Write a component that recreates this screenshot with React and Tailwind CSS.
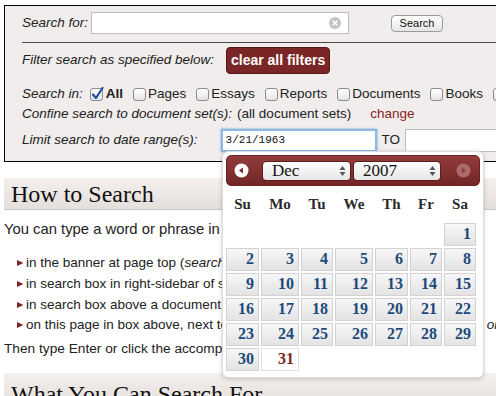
import React from 'react';

const cols = 'grid grid-cols-[33px_38px_32px_38px_33px_32px_32px] gap-[2px]';

const Checkbox = ({ checked }) => (
    <span className="relative inline-block w-[13px] h-[13px] rounded-[3px] border border-[#8c8c8c] bg-linear-to-b from-white to-[#e4e4e4] shrink-0">
        {checked && (
            <svg className="absolute -left-[1px] -top-[3px]" width="15" height="16" viewBox="0 0 15 16">
                <path d="M3 8.5 L6 12 L12.5 2" fill="none" stroke="#1f4fa0" strokeWidth="2.2" strokeLinecap="round" strokeLinejoin="round" />
            </svg>
        )}
    </span>
);

const SelectArrows = () => (
    <svg width="7" height="12" viewBox="0 0 7 12">
        <path d="M3.5 1 L6.5 5 L0.5 5 Z" fill="#555" />
        <path d="M3.5 11 L6.5 7 L0.5 7 Z" fill="#555" />
    </svg>
);

const Bullet = ({ children }) => (
    <li className="flex items-center h-[20.67px] whitespace-nowrap">
        <svg className="ml-[12px] mr-[2px] shrink-0" width="8" height="8" viewBox="0 0 8 8">
            <path d="M1 1 L7.5 4 L1 7 Z" fill="#7d2424" />
        </svg>
        <span>{children}</span>
    </li>
);

const days = [
    [null, null, null, null, null, null, 1],
    [2, 3, 4, 5, 6, 7, 8],
    [9, 10, 11, 12, 13, 14, 15],
    [16, 17, 18, 19, 20, 21, 22],
    [23, 24, 25, 26, 27, 28, 29],
    [30, 31, null, null, null, null, null],
];

const Calendar = () => (
    <div className="absolute left-[222px] top-[151px] w-[262px] h-[227px] bg-white rounded-[6px] border border-[#dcdcdc] shadow-[0_1px_4px_rgba(0,0,0,0.2)] p-[3px] font-['Liberation_Serif',Georgia,serif]">
        <div className="flex items-center h-[31px] rounded-[5px] border border-[#6a2020] bg-linear-to-b from-[#933c3c] to-[#732626] px-[7px]">
            <svg width="15" height="15" viewBox="0 0 15 15">
                <circle cx="7.5" cy="7.5" r="7" fill="#fff" />
                <path d="M5 7.5 L9 4.5 L9 10.5 Z" fill="#7a2828" />
            </svg>
            <div className="ml-[13px] flex items-center justify-between w-[89px] h-[20px] rounded-[4px] border border-[#5c1c1c] bg-linear-to-b from-white to-[#e6e6e6] pl-[9px] pr-[4px] text-[17px] text-[#111]">
                <span>Dec</span>
                <SelectArrows />
            </div>
            <div className="ml-[2px] flex items-center justify-between w-[88px] h-[20px] rounded-[4px] border border-[#5c1c1c] bg-linear-to-b from-white to-[#e6e6e6] pl-[9px] pr-[4px] text-[17px] text-[#111]">
                <span>2007</span>
                <SelectArrows />
            </div>
            <svg className="ml-[15px]" width="15" height="15" viewBox="0 0 15 15">
                <circle cx="7.5" cy="7.5" r="7" fill="#ad6a6a" />
                <path d="M10 7.5 L6 4.5 L6 10.5 Z" fill="#8a3f3f" />
            </svg>
        </div>
        <div className={`${cols} h-[36px] items-center text-center text-[15px] font-bold text-[#2a2a2a]`}>
            {['Su', 'Mo', 'Tu', 'We', 'Th', 'Fr', 'Sa'].map(d => (
                <span key={d}>{d}</span>
            ))}
        </div>
        <div className="flex flex-col gap-[2px] mt-[1px]">
            {days.map((week, i) => (
                <div key={i} className={cols}>
                    {week.map((d, j) => {
                        if (d === null) return <div key={j} className="h-[23px]" />;
                        const today = d === 31;
                        return (
                            <div
                                key={j}
                                className={`h-[23px] border flex items-end justify-end pr-[4px] pb-[1px] text-[16px] font-bold leading-[20px] ${today ? 'bg-white border-[#e2e2e2] text-[#7a2828]' : 'bg-linear-to-b from-[#f7f7f7] to-[#e3e3e3] border-[#d2d2d2] text-[#1d4a7c]'}`}
                            >
                                {d}
                            </div>
                        );
                    })}
                </div>
            ))}
        </div>
    </div>
);

export default function App() {
    return (
        <div className="relative w-[496px] h-[396px] overflow-hidden bg-white text-[13.5px] text-[#222] font-['Liberation_Sans',Arial,sans-serif]">
            <div className="ml-[4px] mt-[5px] w-[560px] border border-black bg-[#f0edec] pl-[17px] pb-[9px]">
                <div className="flex items-center h-[22px] mt-[6px]">
                    <span className="italic">Search for:</span>
                    <div className="relative ml-[3px] w-[258px] h-[22px] border border-[#bdbdbd] bg-white">
                        <svg className="absolute right-[7px] top-[4px]" width="12" height="12" viewBox="0 0 12 12">
                            <circle cx="6" cy="6" r="6" fill="#c4c4c4" />
                            <path d="M3.8 3.8 L8.2 8.2 M8.2 3.8 L3.8 8.2" stroke="#fff" strokeWidth="1.6" />
                        </svg>
                    </div>
                    <button className="ml-[42px] w-[52px] h-[17px] rounded-[4px] border border-[#9a9a9a] bg-linear-to-b from-white to-[#e6e6e6] text-[11px] leading-none text-[#111]">
                        Search
                    </button>
                </div>
                <div className="mt-[8px] border-t border-[#4a4a4a]" />
                <div className="flex items-center h-[27px] mt-[4px]">
                    <span className="italic">Filter search as specified below:</span>
                    <button className="ml-[12px] w-[104px] h-[27px] rounded-[4px] border border-[#551818] bg-[#7b2626] text-white font-bold text-[14px]">
                        clear all filters
                    </button>
                </div>
                <div className="flex items-center h-[20px] mt-[10px] whitespace-nowrap">
                    <span className="italic">Search in:</span>
                    <div className="flex items-center ml-[7px] gap-[10px]">
                        <label className="flex items-center gap-[3px]"><Checkbox checked /><b>All</b></label>
                        <label className="flex items-center gap-[2px]"><Checkbox />Pages</label>
                        <label className="flex items-center gap-[2px]"><Checkbox />Essays</label>
                        <label className="flex items-center gap-[2px]"><Checkbox />Reports</label>
                        <label className="flex items-center gap-[2px]"><Checkbox />Documents</label>
                        <label className="flex items-center gap-[2px]"><Checkbox />Books</label>
                        <label className="flex items-center gap-[2px]"><Checkbox />Images</label>
                    </div>
                </div>
                <div className="flex items-center h-[20px] whitespace-nowrap">
                    <span className="italic">Confine search to document set(s):</span>
                    <span className="ml-[5px]">(all document sets)</span>
                    <span className="ml-[19px] text-[#8b2323]">change</span>
                </div>
                <div className="flex items-center h-[23px] mt-[5px] whitespace-nowrap">
                    <span className="italic">Limit search to date range(s):</span>
                    <div className="ml-[23px] w-[156px] h-[23px] border-2 border-[#8db8e4] shadow-[0_0_2px_#5d98d6] bg-white flex items-center pl-[3px] font-['Liberation_Mono',monospace] text-[11px] text-[#111]">
                        3/21/1963
                    </div>
                    <span className="ml-[5px]">TO</span>
                    <div className="ml-[5px] w-[150px] h-[23px] border border-[#bdbdbd] bg-white" />
                </div>
            </div>

            <div className="pl-[4px] mt-[16px]">
                <div className="h-[32px] flex items-center pl-[7px] bg-linear-to-b from-[#f3f0ee] to-[#e5dfdc] border-b border-[#cfc6c2] font-['Liberation_Serif',Georgia,serif] text-[24px] text-[#111] leading-none">
                    How to Search
                </div>
                <p className="mt-[9px] leading-[20px] text-[14.8px] whitespace-nowrap">You can type a word or phrase in any of these places:</p>
                <ul className="mt-[14px]">
                    <Bullet>in the banner at page top (<i>search box</i>)</Bullet>
                    <Bullet>in search box in right-sidebar of some pages</Bullet>
                    <Bullet>in search box above a document list</Bullet>
                    <Bullet>on this page in box above, next to the label, <i>Search for:</i> and click the buttons <i>on</i></Bullet>
                </ul>
                <p className="mt-[3px] leading-[20px] text-[13.7px] whitespace-nowrap">Then type Enter or click the accompanying button.</p>
                <div className="mt-[14px] h-[32px] flex items-center pl-[7px] bg-linear-to-b from-[#f3f0ee] to-[#e5dfdc] font-['Liberation_Serif',Georgia,serif] text-[24px] text-[#111] leading-none pt-[10px]">
                    What You Can Search For
                </div>
            </div>

            <Calendar />
        </div>
    );
}
